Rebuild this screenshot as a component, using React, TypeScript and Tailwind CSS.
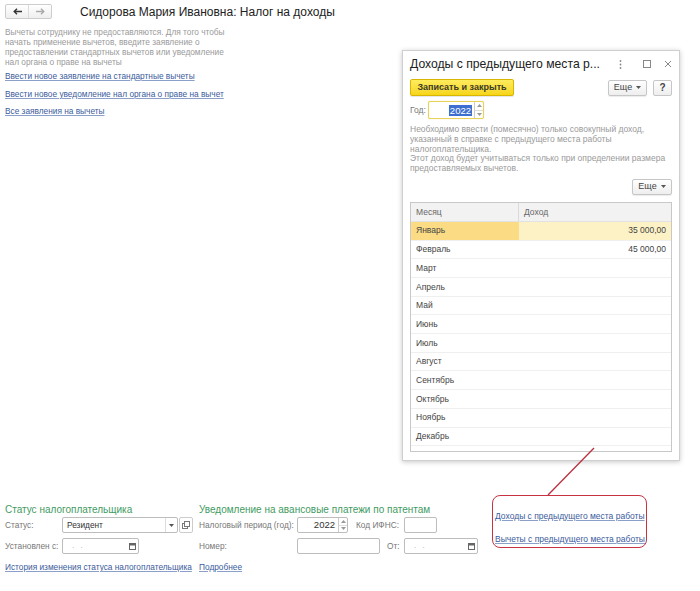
import React from "react";

const link = "text-[#3b5b9c] underline underline-offset-[1px] decoration-[#8aa0c8]";
const label = "text-[#777] text-[8.3px]";

function Spinner() {
  return (
    <div className="flex flex-col w-[9px] h-full border-l border-[#ccc]">
      <div className="flex-1 flex items-center justify-center border-b border-[#ddd]">
        <svg width="5" height="3" viewBox="0 0 5 3"><path d="M0 3 L2.5 0 L5 3Z" fill="#999" /></svg>
      </div>
      <div className="flex-1 flex items-center justify-center">
        <svg width="5" height="3" viewBox="0 0 5 3"><path d="M0 0 L2.5 3 L5 0Z" fill="#999" /></svg>
      </div>
    </div>
  );
}

function CalIcon() {
  return (
    <svg width="7" height="7" viewBox="0 0 7 7">
      <rect x="0.5" y="0.5" width="6" height="6" fill="none" stroke="#666" />
      <rect x="0.5" y="0.5" width="6" height="2" fill="#666" />
    </svg>
  );
}

function DateInput({ w }: { w: string }) {
  return (
    <div className={`${w} h-full flex items-center border border-[#bdbdbd] rounded-[2px] bg-white`}>
      <span className="flex-1 pl-[9px] text-[8px] text-[#aaa] tracking-[2px]">. .</span>
      <div className="w-[12px] h-full flex items-center justify-center">
        <CalIcon />
      </div>
    </div>
  );
}

const months = [
  ["Январь", "35 000,00"],
  ["Февраль", "45 000,00"],
  ["Март", ""],
  ["Апрель", ""],
  ["Май", ""],
  ["Июнь", ""],
  ["Июль", ""],
  ["Август", ""],
  ["Сентябрь", ""],
  ["Октябрь", ""],
  ["Ноябрь", ""],
  ["Декабрь", ""],
];

function EqButton({ cls }: { cls: string }) {
  return (
    <div className={`${cls} h-[16px] flex items-center justify-center gap-[4px] border border-[#c6c6c6] rounded-[2px] bg-gradient-to-b from-white to-[#eeeeee] shadow-[0_1px_1px_rgba(0,0,0,0.08)] text-[9px] text-[#444]`}>
      <span>Еще</span>
      <svg width="5" height="3" viewBox="0 0 5 3"><path d="M0 0 L2.5 3 L5 0Z" fill="#555" /></svg>
    </div>
  );
}

function Dialog() {
  return (
    <div className="absolute left-[402px] top-[50px] w-[278px] h-[411px] bg-white border border-[#cfcfcf] shadow-[0_1px_5px_rgba(0,0,0,0.22)] flex flex-col px-[7px]">
      <div className="h-[26px] flex items-center">
        <span className="text-[12.2px] text-[#222] whitespace-nowrap">Доходы с предыдущего места р...</span>
        <div className="flex-1" />
        <svg width="3" height="9" viewBox="0 0 3 9">
          <circle cx="1.5" cy="1" r="0.9" fill="#888" />
          <circle cx="1.5" cy="4.5" r="0.9" fill="#888" />
          <circle cx="1.5" cy="8" r="0.9" fill="#888" />
        </svg>
        <svg className="ml-[21px]" width="8" height="8" viewBox="0 0 8 8"><rect x="0.5" y="0.5" width="7" height="7" fill="none" stroke="#888" /></svg>
        <svg className="ml-[13px]" width="8" height="8" viewBox="0 0 8 8"><path d="M1 1 L7 7 M7 1 L1 7" stroke="#888" strokeWidth="1" /></svg>
      </div>
      <div className="mt-[2px] h-[17px] flex items-center">
        <div className="w-[104px] h-[17px] flex items-center justify-center rounded-[2px] border border-[#d8b600] bg-gradient-to-b from-[#ffec5c] to-[#f6d512] text-[9px] font-bold text-[#3a3a2a] shadow-[0_1px_1px_rgba(0,0,0,0.1)]">
          Записать и закрыть
        </div>
        <div className="flex-1" />
        <EqButton cls="w-[39px]" />
        <div className="ml-[6px] w-[19px] h-[16px] flex items-center justify-center border border-[#c6c6c6] rounded-[2px] bg-gradient-to-b from-white to-[#eeeeee] text-[10px] font-bold text-[#444]">?</div>
      </div>
      <div className="mt-[5px] h-[18px] flex items-center">
        <span className="text-[#777] text-[8.5px] w-[18px]">Год:</span>
        <div className="w-[56px] h-[18px] flex items-center border border-[#e8d15a] rounded-[2px] bg-white shadow-[0_0_1px_#f0dc70]">
          <div className="flex-1 flex justify-end pr-[2px]">
            <span className="bg-[#3d6fd1] text-white text-[9.5px] leading-[11px] px-[1px]">2022</span>
          </div>
          <Spinner />
        </div>
      </div>
      <div className="mt-[6px] text-[8.5px] leading-[9.8px] text-[#9a9a9a] pr-[4px]">
        Необходимо ввести (помесячно) только совокупный доход, указанный в справке с предыдущего места работы налогоплательщика.
        <br />
        Этот доход будет учитываться только при определении размера предоставляемых вычетов.
      </div>
      <div className="mt-[5px] flex justify-end">
        <EqButton cls="w-[40px]" />
      </div>
      <div className="mt-[7px] mb-[8px] flex-1 border border-[#c8c8c8] flex flex-col text-[8.5px] text-[#444]">
        <div className="h-[19px] flex bg-[#f2f2f2] border-b border-[#e2e2e2] text-[#666]">
          <div className="w-[108px] border-r border-[#dadada] flex items-center pl-[5px]">Месяц</div>
          <div className="flex-1 flex items-center pl-[5px]">Доход</div>
        </div>
        {months.map(([m, v], i) => (
          <div key={m} className={`h-[18.7px] flex border-b border-[#efefef] ${i === 0 ? "bg-[#fdf2c6]" : ""}`}>
            <div className={`w-[108px] flex items-center pl-[5px] ${i === 0 ? "bg-[#fbdc84]" : ""}`}>{m}</div>
            <div className="flex-1 flex items-center justify-end pr-[5px]">{v}</div>
          </div>
        ))}
      </div>
    </div>
  );
}

export default function App() {
  return (
    <div className="relative w-[700px] h-[591px] bg-white overflow-hidden font-['Liberation_Sans',Arial,sans-serif]">
      <div className="h-full flex flex-col">
        <div className="pt-[4px] pl-[5px] flex items-center h-[19px]">
          <div className="flex h-[15px] w-[47px] border border-[#cdcdcd] rounded-[2px] bg-gradient-to-b from-white to-[#efefef]">
            <div className="flex-1 flex items-center justify-center border-r border-[#dcdcdc]">
              <svg width="9" height="7" viewBox="0 0 9 7"><path d="M9 3.5 H1.5 M4 0.8 L1.2 3.5 L4 6.2" stroke="#333" strokeWidth="1.4" fill="none" /></svg>
            </div>
            <div className="flex-1 flex items-center justify-center">
              <svg width="9" height="7" viewBox="0 0 9 7"><path d="M0 3.5 H7.5 M5 0.8 L7.8 3.5 L5 6.2" stroke="#aaa" strokeWidth="1.4" fill="none" /></svg>
            </div>
          </div>
          <span className="ml-[28px] text-[12px] text-[#222] whitespace-nowrap">Сидорова Мария Ивановна: Налог на доходы</span>
        </div>
        <div className="pl-[5px] mt-[8px] w-[233px] text-[8.3px] leading-[10px] text-[#9a9a9a]">
          Вычеты сотруднику не предоставляются. Для того чтобы начать применение вычетов, введите заявление о предоставлении стандартных вычетов или уведомление нал органа о праве на вычеты
        </div>
        <div className="pl-[5px] flex flex-col items-start text-[8.3px] leading-[10px]">
          <span className={`${link} mt-[4px]`}>Ввести новое заявление на стандартные вычеты</span>
          <span className={`${link} mt-[8px]`}>Ввести новое уведомление нал органа о праве на вычет</span>
          <span className={`${link} mt-[7px]`}>Все заявления на вычеты</span>
        </div>

        <div className="mt-auto h-[96px] flex pl-[5px] text-[8.3px]">
          <div className="w-[194px] pt-[8px] flex flex-col">
            <div className="h-[12px] flex items-center text-[10px] text-[#3f9b5f] whitespace-nowrap">Статус налогоплательщика</div>
            <div className="mt-[2px] h-[16px] flex items-center">
              <span className={`${label} w-[57px]`}>Статус:</span>
              <div className="w-[116px] h-full flex items-center border border-[#bdbdbd] rounded-[2px] bg-white">
                <span className="flex-1 pl-[4px] text-[#333]">Резидент</span>
                <div className="w-[12px] h-full flex items-center justify-center border-l border-[#ddd]">
                  <svg width="5" height="3" viewBox="0 0 5 3"><path d="M0 0 L2.5 3 L5 0Z" fill="#555" /></svg>
                </div>
              </div>
              <div className="ml-[1px] w-[14px] h-full flex items-center justify-center border border-[#ccc] rounded-[2px] bg-white">
                <svg width="8" height="8" viewBox="0 0 8 8">
                  <rect x="0.5" y="2.5" width="5" height="5" fill="white" stroke="#777" />
                  <rect x="2.5" y="0.5" width="5" height="5" fill="white" stroke="#777" />
                </svg>
              </div>
            </div>
            <div className="mt-[5px] h-[16px] flex items-center">
              <span className={`${label} w-[57px]`}>Установлен с:</span>
              <DateInput w="w-[77px]" />
            </div>
            <span className={`${link} mt-[8px] leading-[10px] whitespace-nowrap self-start`}>История изменения статуса налогоплательщика</span>
          </div>
          <div className="w-[293px] pt-[8px] flex flex-col">
            <div className="h-[12px] flex items-center text-[10px] text-[#3f9b5f] whitespace-nowrap">Уведомление на авансовые платежи по патентам</div>
            <div className="mt-[2px] h-[16px] flex items-center">
              <span className={`${label} w-[98px] whitespace-nowrap`}>Налоговый период (год):</span>
              <div className="w-[51px] h-full flex items-center border border-[#bdbdbd] rounded-[2px] bg-white">
                <span className="flex-1 text-right pr-[3px] text-[9.5px] text-[#333]">2022</span>
                <Spinner />
              </div>
              <span className={`${label} ml-[8px] w-[48px]`}>Код ИФНС:</span>
              <div className="w-[33px] h-full border border-[#bdbdbd] rounded-[2px] bg-white" />
            </div>
            <div className="mt-[5px] h-[16px] flex items-center">
              <span className={`${label} w-[98px]`}>Номер:</span>
              <div className="w-[83px] h-full border border-[#bdbdbd] rounded-[2px] bg-white" />
              <span className={`${label} ml-[7px] w-[17px]`}>От:</span>
              <DateInput w="w-[74px]" />
            </div>
            <span className={`${link} mt-[8px] leading-[10px] self-start`}>Подробнее</span>
          </div>
          <div className="w-[155px] h-[53px] border-[1.5px] border-[#c83342] rounded-[8px] flex flex-col items-start pl-[2px] pt-[15px] leading-[10px] text-[8.5px]">
            <span className={`${link} whitespace-nowrap`}>Доходы с предыдущего места работы</span>
            <span className={`${link} mt-[13px] whitespace-nowrap`}>Вычеты с предыдущего места работы</span>
          </div>
        </div>
      </div>

      <Dialog />

      <svg className="absolute left-0 top-0 pointer-events-none" width="700" height="591">
        <line x1="594" y1="448" x2="548" y2="495" stroke="#b8303f" strokeWidth="1.3" />
      </svg>
    </div>
  );
}
